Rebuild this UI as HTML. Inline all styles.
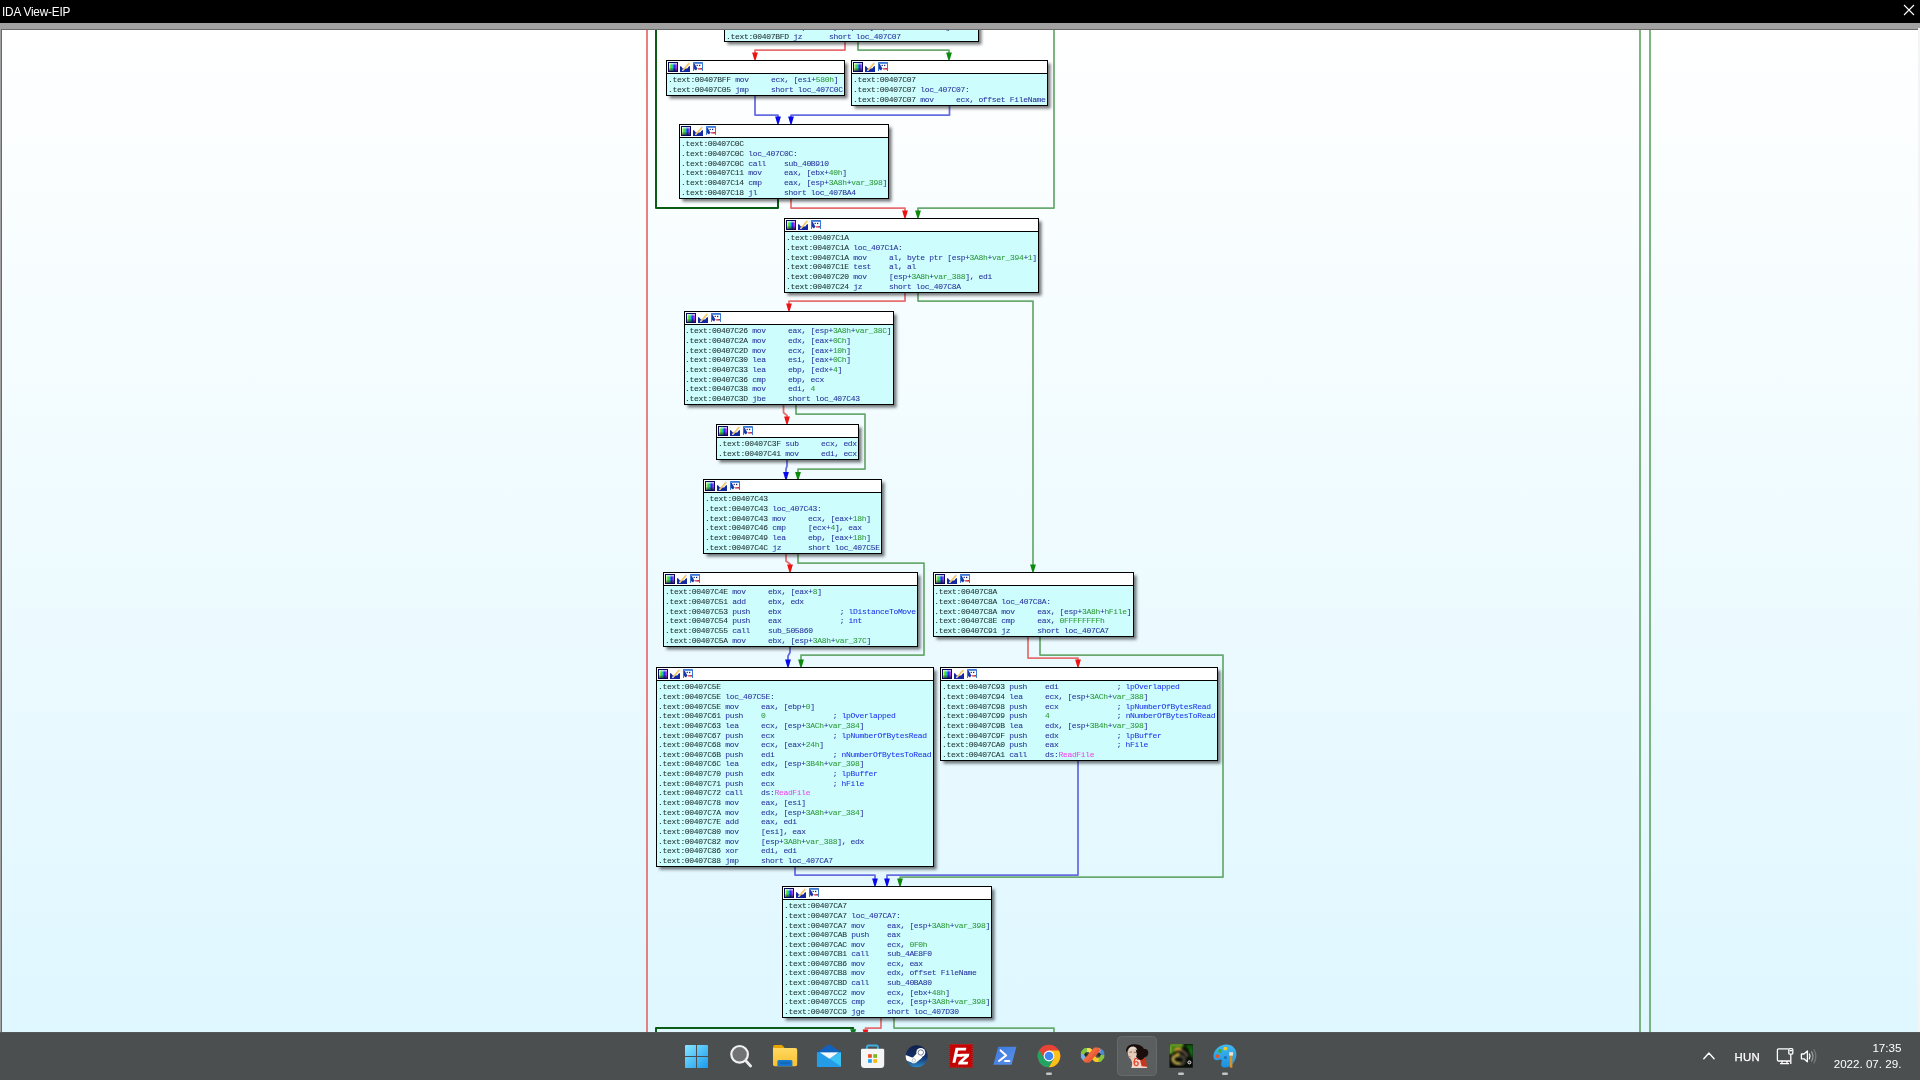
<!DOCTYPE html>
<html><head><meta charset="utf-8"><title>IDA View-EIP</title><style>

html,body{margin:0;padding:0}
body{width:1920px;height:1080px;overflow:hidden;position:relative;background:#fff;font-family:"Liberation Sans",sans-serif}
#tb{position:absolute;left:0;top:0;width:1920px;height:23px;background:#000}
#tt{position:absolute;left:1.8px;top:4.3px;transform:scaleY(1.07);transform-origin:0 11.9px;font-size:11.8px;line-height:16px;color:#fff;letter-spacing:-0.2px;white-space:nowrap;will-change:transform}
#gs{position:absolute;left:0;top:23px;width:1920px;height:6px;background:#a1a1a1}
#gl{position:absolute;left:0;top:29px;width:1918px;height:1px;background:#696969}
#lb{position:absolute;left:0;top:29px;width:1px;height:1051px;background:#a1a1a1}
#lb2{position:absolute;left:1px;top:29px;width:1px;height:1051px;background:#696969}
#rb{position:absolute;left:1918px;top:28px;width:2px;height:1052px;background:#f4f4f4}
#view{position:absolute;left:2px;top:30px;width:1916px;height:1002px;background:linear-gradient(#ffffff,#dff7ff);overflow:hidden}
#g{position:absolute;left:-2px;top:-30px;width:1920px;height:1080px;will-change:transform}
.edges{position:absolute;left:0;top:0}
.n{position:absolute;border:1px solid #000;background:#cdfefd;box-shadow:2.5px 2.5px 3px rgba(10,14,18,.58);overflow:hidden}
.n .h{position:absolute;left:0;top:0;right:0;height:12px;background:#fff;border-bottom:1px solid #000}
.ic{position:absolute;left:1px;top:1px}
.n p{position:absolute;left:1.0px;margin:0;white-space:pre;font-family:"Liberation Mono",monospace;font-size:8px;line-height:10px;height:10px;letter-spacing:-0.3228px;color:#26309c;-webkit-text-stroke:0.06px currentColor}
.n p i{font-style:normal;color:#1e2e30}
.n p b{font-weight:normal}
.g{color:#2e9a3a}.c{color:#1c34ec}.m{color:#f044f0}
#task{position:absolute;left:0;top:1032px;width:1920px;height:48px;background:#4b4f50;will-change:transform}
#task svg{position:absolute;left:0;top:0}
.tx{position:absolute;color:#fff;white-space:nowrap}

</style></head><body>
<svg width="0" height="0" style="position:absolute"><defs><linearGradient id="irb" x1="0" x2="1"><stop offset="0" stop-color="#f4ffd0"/><stop offset=".22" stop-color="#58e020"/><stop offset=".45" stop-color="#20c8b8"/><stop offset=".68" stop-color="#2828f0"/><stop offset="1" stop-color="#d048e8"/></linearGradient><linearGradient id="idk" x1="0" y1="0" x2="0" y2="1"><stop offset="0" stop-color="#fff" stop-opacity=".8"/><stop offset=".3" stop-color="#fff" stop-opacity="0"/><stop offset=".55" stop-color="#000" stop-opacity="0"/><stop offset="1" stop-color="#000" stop-opacity=".6"/></linearGradient></defs></svg>
<div id="tb"></div><div id="tt">IDA View-EIP</div>
<svg style="position:absolute;left:1903px;top:4px" width="12" height="12" viewBox="0 0 12 12"><path d="M1 1 L11 11 M11 1 L1 11" stroke="#fff" stroke-width="1.1" fill="none"/></svg>
<div id="gs"></div><div id="gl"></div><div id="lb"></div><div id="lb2"></div><div id="rb"></div>
<div id="view"><div id="g">
<svg class="edges" width="1920" height="1080" viewBox="0 0 1920 1080"><path d="M647 30 L647 1032" fill="none" stroke="#e56e70" stroke-width="1.75" stroke-linejoin="round"/><path d="M656 30 L656 208 L778 208 L778 198" fill="none" stroke="#0b5c16" stroke-width="2" stroke-linejoin="round"/><path d="M1054 30 L1054 208 L918 208 L918 211" fill="none" stroke="#6aaa70" stroke-width="1.75" stroke-linejoin="round"/><path d="M915.1 210.4 L920.9 210.4 L918.5 218.5 L917.5 218.5 Z" fill="#0b8a0b"/><path d="M1640 30 L1640 1032" fill="none" stroke="#6aaa70" stroke-width="1.75" stroke-linejoin="round"/><path d="M1650 30 L1650 1032" fill="none" stroke="#6aaa70" stroke-width="1.75" stroke-linejoin="round"/><path d="M845 42 L845 50 L755 50 L755 53" fill="none" stroke="#e56e70" stroke-width="1.75" stroke-linejoin="round"/><path d="M752.1 52.4 L757.9 52.4 L755.5 60.5 L754.5 60.5 Z" fill="#ee1212"/><path d="M858 42 L858 50 L949 50 L949 53" fill="none" stroke="#6aaa70" stroke-width="1.75" stroke-linejoin="round"/><path d="M946.1 52.4 L951.9 52.4 L949.5 60.5 L948.5 60.5 Z" fill="#0b8a0b"/><path d="M755 96 L755 115 L778 115 L778 117" fill="none" stroke="#646ce0" stroke-width="1.75" stroke-linejoin="round"/><path d="M775.1 116.4 L780.9 116.4 L778.5 124.5 L777.5 124.5 Z" fill="#0808ee"/><path d="M949.5 106 L949.5 115 L791 115 L791 117" fill="none" stroke="#646ce0" stroke-width="1.75" stroke-linejoin="round"/><path d="M788.1 116.4 L793.9 116.4 L791.5 124.5 L790.5 124.5 Z" fill="#0808ee"/><path d="M791 199 L791 208 L905 208 L905 211" fill="none" stroke="#e56e70" stroke-width="1.75" stroke-linejoin="round"/><path d="M902.1 210.4 L907.9 210.4 L905.5 218.5 L904.5 218.5 Z" fill="#ee1212"/><path d="M905 293 L905 301 L789 301 L789 304" fill="none" stroke="#e56e70" stroke-width="1.75" stroke-linejoin="round"/><path d="M786.1 303.4 L791.9 303.4 L789.5 311.5 L788.5 311.5 Z" fill="#ee1212"/><path d="M918 293 L918 301 L1033 301 L1033 565" fill="none" stroke="#6aaa70" stroke-width="1.75" stroke-linejoin="round"/><path d="M1030.1 564.4 L1035.9 564.4 L1033.5 572.5 L1032.5 572.5 Z" fill="#0b8a0b"/><path d="M783.5 405 L783.5 412.5 L787 415.5 L787 417" fill="none" stroke="#e56e70" stroke-width="1.75" stroke-linejoin="round"/><path d="M784.1 416.4 L789.9 416.4 L787.5 424.5 L786.5 424.5 Z" fill="#ee1212"/><path d="M796 405 L796 414 L865 414 L865 469 L798 469 L798 472.5" fill="none" stroke="#6aaa70" stroke-width="1.75" stroke-linejoin="round"/><path d="M795.1 471.9 L800.9 471.9 L798.5 480 L797.5 480 Z" fill="#0b8a0b"/><path d="M787 460 L787 466 L786 469 L786 472.5" fill="none" stroke="#646ce0" stroke-width="1.75" stroke-linejoin="round"/><path d="M783.1 471.9 L788.9 471.9 L786.5 480 L785.5 480 Z" fill="#0808ee"/><path d="M786 554 L786 561 L790 564 L790 565" fill="none" stroke="#e56e70" stroke-width="1.75" stroke-linejoin="round"/><path d="M787.1 564.4 L792.9 564.4 L790.5 572.5 L789.5 572.5 Z" fill="#ee1212"/><path d="M798 554 L798 563 L924 563 L924 655 L801 655 L801 660" fill="none" stroke="#6aaa70" stroke-width="1.75" stroke-linejoin="round"/><path d="M798.1 659.4 L803.9 659.4 L801.5 667.5 L800.5 667.5 Z" fill="#0b8a0b"/><path d="M790 647 L790 652.5 L788 656 L788 660" fill="none" stroke="#646ce0" stroke-width="1.75" stroke-linejoin="round"/><path d="M785.1 659.4 L790.9 659.4 L788.5 667.5 L787.5 667.5 Z" fill="#0808ee"/><path d="M1028 637 L1028 658 L1078 658 L1078 660" fill="none" stroke="#e56e70" stroke-width="1.75" stroke-linejoin="round"/><path d="M1075.1 659.4 L1080.9 659.4 L1078.5 667.5 L1077.5 667.5 Z" fill="#ee1212"/><path d="M1040 637 L1040 655 L1223 655 L1223 877 L900 877 L900 879" fill="none" stroke="#6aaa70" stroke-width="1.75" stroke-linejoin="round"/><path d="M897.1 878.4 L902.9 878.4 L900.5 886.5 L899.5 886.5 Z" fill="#0b8a0b"/><path d="M795 867 L795 875 L875 875 L875 879" fill="none" stroke="#646ce0" stroke-width="1.75" stroke-linejoin="round"/><path d="M872.1 878.4 L877.9 878.4 L875.5 886.5 L874.5 886.5 Z" fill="#0808ee"/><path d="M1078 761 L1078 875 L887 875 L887 879" fill="none" stroke="#646ce0" stroke-width="1.75" stroke-linejoin="round"/><path d="M884.1 878.4 L889.9 878.4 L887.5 886.5 L886.5 886.5 Z" fill="#0808ee"/><path d="M881 1018 L881 1028 L865.5 1028 L865.5 1029.5" fill="none" stroke="#e56e70" stroke-width="1.75" stroke-linejoin="round"/><path d="M862.6 1029.4 L868.4 1029.4 L866 1037.5 L865 1037.5 Z" fill="#ee1212"/><path d="M894 1018 L894 1028 L1054 1028 L1054 1032" fill="none" stroke="#6aaa70" stroke-width="1.75" stroke-linejoin="round"/><path d="M656 1032 L656 1028 L853.2 1028 L853.2 1029.5" fill="none" stroke="#0b5c16" stroke-width="2" stroke-linejoin="round"/><path d="M850.1 1029.3 L856.3 1029.3 L853.2 1037 Z" fill="#0b7a1c"/></svg>
<div class="n" style="left:724px;top:6px;width:253px;height:34px"><div class="h"><svg class="ic" width="36" height="10" viewBox="0 0 36 10"><rect x="0" y="0" width="10" height="10" fill="#08085c"/><rect x="1" y="1" width="8" height="8" fill="url(#irb)"/><rect x="1" y="1" width="8" height="8" fill="url(#idk)"/><path d="M12 4.3 L13 4.3 L14.8 6.6 L19.2 6.6 L21 4.3 L22 4.3 L22 10 L12 10 Z" fill="#1428a0"/><path d="M14.6 7.6 L20.4 0.8 L21.6 1.9 L15.8 8.6 L14.2 9 Z" fill="#f4c860"/><path d="M14.2 9 L14.6 7.6 L15.8 8.6 Z" fill="#fff"/><path d="M20.4 0.8 L21 0.2 L22 1.2 L21.6 1.9 Z" fill="#c8d0e0"/><rect x="25" y="0" width="10" height="9" rx="0.6" fill="#3a78d8"/><rect x="26" y="1.8" width="8" height="7.6" fill="#fff"/><path d="M26 2 L26 7 L28 8.4 L29.4 6.4 L26.8 2 Z" fill="#1838a8"/><rect x="28.6" y="2.8" width="1.2" height="1.2" fill="#102080"/><rect x="31" y="2.8" width="1.3" height="1.3" fill="#102080"/><path d="M29.4 6.4 L34 6 L34 7.4 L30.4 7.6 Z" fill="#c02030"/></svg></div><p style="top:15px"><i>.text:00407BF8</i> cmp     byte ptr [esp+<b class="g">3A8h</b>+<b class="g">var_394</b>], <b class="g">0</b></p><p style="top:25px"><i>.text:00407BFD</i> jz      short loc_407C07</p></div>
<div class="n" style="left:666px;top:60px;width:177px;height:34px"><div class="h"><svg class="ic" width="36" height="10" viewBox="0 0 36 10"><rect x="0" y="0" width="10" height="10" fill="#08085c"/><rect x="1" y="1" width="8" height="8" fill="url(#irb)"/><rect x="1" y="1" width="8" height="8" fill="url(#idk)"/><path d="M12 4.3 L13 4.3 L14.8 6.6 L19.2 6.6 L21 4.3 L22 4.3 L22 10 L12 10 Z" fill="#1428a0"/><path d="M14.6 7.6 L20.4 0.8 L21.6 1.9 L15.8 8.6 L14.2 9 Z" fill="#f4c860"/><path d="M14.2 9 L14.6 7.6 L15.8 8.6 Z" fill="#fff"/><path d="M20.4 0.8 L21 0.2 L22 1.2 L21.6 1.9 Z" fill="#c8d0e0"/><rect x="25" y="0" width="10" height="9" rx="0.6" fill="#3a78d8"/><rect x="26" y="1.8" width="8" height="7.6" fill="#fff"/><path d="M26 2 L26 7 L28 8.4 L29.4 6.4 L26.8 2 Z" fill="#1838a8"/><rect x="28.6" y="2.8" width="1.2" height="1.2" fill="#102080"/><rect x="31" y="2.8" width="1.3" height="1.3" fill="#102080"/><path d="M29.4 6.4 L34 6 L34 7.4 L30.4 7.6 Z" fill="#c02030"/></svg></div><p style="top:14px"><i>.text:00407BFF</i> mov     ecx, [esi+<b class="g">580h</b>]</p><p style="top:24px"><i>.text:00407C05</i> jmp     short loc_407C0C</p></div>
<div class="n" style="left:851px;top:60px;width:195px;height:44px"><div class="h"><svg class="ic" width="36" height="10" viewBox="0 0 36 10"><rect x="0" y="0" width="10" height="10" fill="#08085c"/><rect x="1" y="1" width="8" height="8" fill="url(#irb)"/><rect x="1" y="1" width="8" height="8" fill="url(#idk)"/><path d="M12 4.3 L13 4.3 L14.8 6.6 L19.2 6.6 L21 4.3 L22 4.3 L22 10 L12 10 Z" fill="#1428a0"/><path d="M14.6 7.6 L20.4 0.8 L21.6 1.9 L15.8 8.6 L14.2 9 Z" fill="#f4c860"/><path d="M14.2 9 L14.6 7.6 L15.8 8.6 Z" fill="#fff"/><path d="M20.4 0.8 L21 0.2 L22 1.2 L21.6 1.9 Z" fill="#c8d0e0"/><rect x="25" y="0" width="10" height="9" rx="0.6" fill="#3a78d8"/><rect x="26" y="1.8" width="8" height="7.6" fill="#fff"/><path d="M26 2 L26 7 L28 8.4 L29.4 6.4 L26.8 2 Z" fill="#1838a8"/><rect x="28.6" y="2.8" width="1.2" height="1.2" fill="#102080"/><rect x="31" y="2.8" width="1.3" height="1.3" fill="#102080"/><path d="M29.4 6.4 L34 6 L34 7.4 L30.4 7.6 Z" fill="#c02030"/></svg></div><p style="top:14px"><i>.text:00407C07</i></p><p style="top:24px"><i>.text:00407C07</i> loc_407C07:</p><p style="top:34px"><i>.text:00407C07</i> mov     ecx, offset FileName</p></div>
<div class="n" style="left:679px;top:124px;width:208px;height:73px"><div class="h"><svg class="ic" width="36" height="10" viewBox="0 0 36 10"><rect x="0" y="0" width="10" height="10" fill="#08085c"/><rect x="1" y="1" width="8" height="8" fill="url(#irb)"/><rect x="1" y="1" width="8" height="8" fill="url(#idk)"/><path d="M12 4.3 L13 4.3 L14.8 6.6 L19.2 6.6 L21 4.3 L22 4.3 L22 10 L12 10 Z" fill="#1428a0"/><path d="M14.6 7.6 L20.4 0.8 L21.6 1.9 L15.8 8.6 L14.2 9 Z" fill="#f4c860"/><path d="M14.2 9 L14.6 7.6 L15.8 8.6 Z" fill="#fff"/><path d="M20.4 0.8 L21 0.2 L22 1.2 L21.6 1.9 Z" fill="#c8d0e0"/><rect x="25" y="0" width="10" height="9" rx="0.6" fill="#3a78d8"/><rect x="26" y="1.8" width="8" height="7.6" fill="#fff"/><path d="M26 2 L26 7 L28 8.4 L29.4 6.4 L26.8 2 Z" fill="#1838a8"/><rect x="28.6" y="2.8" width="1.2" height="1.2" fill="#102080"/><rect x="31" y="2.8" width="1.3" height="1.3" fill="#102080"/><path d="M29.4 6.4 L34 6 L34 7.4 L30.4 7.6 Z" fill="#c02030"/></svg></div><p style="top:14px"><i>.text:00407C0C</i></p><p style="top:24px"><i>.text:00407C0C</i> loc_407C0C:</p><p style="top:34px"><i>.text:00407C0C</i> call    sub_40B910</p><p style="top:43px"><i>.text:00407C11</i> mov     eax, [ebx+<b class="g">40h</b>]</p><p style="top:53px"><i>.text:00407C14</i> cmp     eax, [esp+<b class="g">3A8h</b>+<b class="g">var_398</b>]</p><p style="top:63px"><i>.text:00407C18</i> jl      short loc_407BA4</p></div>
<div class="n" style="left:784px;top:218px;width:253px;height:73px"><div class="h"><svg class="ic" width="36" height="10" viewBox="0 0 36 10"><rect x="0" y="0" width="10" height="10" fill="#08085c"/><rect x="1" y="1" width="8" height="8" fill="url(#irb)"/><rect x="1" y="1" width="8" height="8" fill="url(#idk)"/><path d="M12 4.3 L13 4.3 L14.8 6.6 L19.2 6.6 L21 4.3 L22 4.3 L22 10 L12 10 Z" fill="#1428a0"/><path d="M14.6 7.6 L20.4 0.8 L21.6 1.9 L15.8 8.6 L14.2 9 Z" fill="#f4c860"/><path d="M14.2 9 L14.6 7.6 L15.8 8.6 Z" fill="#fff"/><path d="M20.4 0.8 L21 0.2 L22 1.2 L21.6 1.9 Z" fill="#c8d0e0"/><rect x="25" y="0" width="10" height="9" rx="0.6" fill="#3a78d8"/><rect x="26" y="1.8" width="8" height="7.6" fill="#fff"/><path d="M26 2 L26 7 L28 8.4 L29.4 6.4 L26.8 2 Z" fill="#1838a8"/><rect x="28.6" y="2.8" width="1.2" height="1.2" fill="#102080"/><rect x="31" y="2.8" width="1.3" height="1.3" fill="#102080"/><path d="M29.4 6.4 L34 6 L34 7.4 L30.4 7.6 Z" fill="#c02030"/></svg></div><p style="top:14px"><i>.text:00407C1A</i></p><p style="top:24px"><i>.text:00407C1A</i> loc_407C1A:</p><p style="top:34px"><i>.text:00407C1A</i> mov     al, byte ptr [esp+<b class="g">3A8h</b>+<b class="g">var_394</b>+<b class="g">1</b>]</p><p style="top:43px"><i>.text:00407C1E</i> test    al, al</p><p style="top:53px"><i>.text:00407C20</i> mov     [esp+<b class="g">3A8h</b>+<b class="g">var_388</b>], edi</p><p style="top:63px"><i>.text:00407C24</i> jz      short loc_407C8A</p></div>
<div class="n" style="left:684px;top:311px;width:208px;height:92px"><div class="h"><svg class="ic" width="36" height="10" viewBox="0 0 36 10"><rect x="0" y="0" width="10" height="10" fill="#08085c"/><rect x="1" y="1" width="8" height="8" fill="url(#irb)"/><rect x="1" y="1" width="8" height="8" fill="url(#idk)"/><path d="M12 4.3 L13 4.3 L14.8 6.6 L19.2 6.6 L21 4.3 L22 4.3 L22 10 L12 10 Z" fill="#1428a0"/><path d="M14.6 7.6 L20.4 0.8 L21.6 1.9 L15.8 8.6 L14.2 9 Z" fill="#f4c860"/><path d="M14.2 9 L14.6 7.6 L15.8 8.6 Z" fill="#fff"/><path d="M20.4 0.8 L21 0.2 L22 1.2 L21.6 1.9 Z" fill="#c8d0e0"/><rect x="25" y="0" width="10" height="9" rx="0.6" fill="#3a78d8"/><rect x="26" y="1.8" width="8" height="7.6" fill="#fff"/><path d="M26 2 L26 7 L28 8.4 L29.4 6.4 L26.8 2 Z" fill="#1838a8"/><rect x="28.6" y="2.8" width="1.2" height="1.2" fill="#102080"/><rect x="31" y="2.8" width="1.3" height="1.3" fill="#102080"/><path d="M29.4 6.4 L34 6 L34 7.4 L30.4 7.6 Z" fill="#c02030"/></svg></div><p style="top:14px;left:0.1px"><i>.text:00407C26</i> mov     eax, [esp+<b class="g">3A8h</b>+<b class="g">var_38C</b>]</p><p style="top:24px;left:0.1px"><i>.text:00407C2A</i> mov     edx, [eax+<b class="g">0Ch</b>]</p><p style="top:34px;left:0.1px"><i>.text:00407C2D</i> mov     ecx, [eax+<b class="g">10h</b>]</p><p style="top:43px;left:0.1px"><i>.text:00407C30</i> lea     esi, [eax+<b class="g">0Ch</b>]</p><p style="top:53px;left:0.1px"><i>.text:00407C33</i> lea     ebp, [edx+<b class="g">4</b>]</p><p style="top:63px;left:0.1px"><i>.text:00407C36</i> cmp     ebp, ecx</p><p style="top:72px;left:0.1px"><i>.text:00407C38</i> mov     edi, <b class="g">4</b></p><p style="top:82px;left:0.1px"><i>.text:00407C3D</i> jbe     short loc_407C43</p></div>
<div class="n" style="left:716px;top:424px;width:141px;height:34px"><div class="h"><svg class="ic" width="36" height="10" viewBox="0 0 36 10"><rect x="0" y="0" width="10" height="10" fill="#08085c"/><rect x="1" y="1" width="8" height="8" fill="url(#irb)"/><rect x="1" y="1" width="8" height="8" fill="url(#idk)"/><path d="M12 4.3 L13 4.3 L14.8 6.6 L19.2 6.6 L21 4.3 L22 4.3 L22 10 L12 10 Z" fill="#1428a0"/><path d="M14.6 7.6 L20.4 0.8 L21.6 1.9 L15.8 8.6 L14.2 9 Z" fill="#f4c860"/><path d="M14.2 9 L14.6 7.6 L15.8 8.6 Z" fill="#fff"/><path d="M20.4 0.8 L21 0.2 L22 1.2 L21.6 1.9 Z" fill="#c8d0e0"/><rect x="25" y="0" width="10" height="9" rx="0.6" fill="#3a78d8"/><rect x="26" y="1.8" width="8" height="7.6" fill="#fff"/><path d="M26 2 L26 7 L28 8.4 L29.4 6.4 L26.8 2 Z" fill="#1838a8"/><rect x="28.6" y="2.8" width="1.2" height="1.2" fill="#102080"/><rect x="31" y="2.8" width="1.3" height="1.3" fill="#102080"/><path d="M29.4 6.4 L34 6 L34 7.4 L30.4 7.6 Z" fill="#c02030"/></svg></div><p style="top:14px"><i>.text:00407C3F</i> sub     ecx, edx</p><p style="top:24px"><i>.text:00407C41</i> mov     edi, ecx</p></div>
<div class="n" style="left:703px;top:479px;width:177px;height:73px"><div class="h"><svg class="ic" width="36" height="10" viewBox="0 0 36 10"><rect x="0" y="0" width="10" height="10" fill="#08085c"/><rect x="1" y="1" width="8" height="8" fill="url(#irb)"/><rect x="1" y="1" width="8" height="8" fill="url(#idk)"/><path d="M12 4.3 L13 4.3 L14.8 6.6 L19.2 6.6 L21 4.3 L22 4.3 L22 10 L12 10 Z" fill="#1428a0"/><path d="M14.6 7.6 L20.4 0.8 L21.6 1.9 L15.8 8.6 L14.2 9 Z" fill="#f4c860"/><path d="M14.2 9 L14.6 7.6 L15.8 8.6 Z" fill="#fff"/><path d="M20.4 0.8 L21 0.2 L22 1.2 L21.6 1.9 Z" fill="#c8d0e0"/><rect x="25" y="0" width="10" height="9" rx="0.6" fill="#3a78d8"/><rect x="26" y="1.8" width="8" height="7.6" fill="#fff"/><path d="M26 2 L26 7 L28 8.4 L29.4 6.4 L26.8 2 Z" fill="#1838a8"/><rect x="28.6" y="2.8" width="1.2" height="1.2" fill="#102080"/><rect x="31" y="2.8" width="1.3" height="1.3" fill="#102080"/><path d="M29.4 6.4 L34 6 L34 7.4 L30.4 7.6 Z" fill="#c02030"/></svg></div><p style="top:14px"><i>.text:00407C43</i></p><p style="top:24px"><i>.text:00407C43</i> loc_407C43:</p><p style="top:34px"><i>.text:00407C43</i> mov     ecx, [eax+<b class="g">18h</b>]</p><p style="top:43px"><i>.text:00407C46</i> cmp     [ecx+<b class="g">4</b>], eax</p><p style="top:53px"><i>.text:00407C49</i> lea     ebp, [eax+<b class="g">18h</b>]</p><p style="top:63px"><i>.text:00407C4C</i> jz      short loc_407C5E</p></div>
<div class="n" style="left:663px;top:572px;width:253px;height:73px"><div class="h"><svg class="ic" width="36" height="10" viewBox="0 0 36 10"><rect x="0" y="0" width="10" height="10" fill="#08085c"/><rect x="1" y="1" width="8" height="8" fill="url(#irb)"/><rect x="1" y="1" width="8" height="8" fill="url(#idk)"/><path d="M12 4.3 L13 4.3 L14.8 6.6 L19.2 6.6 L21 4.3 L22 4.3 L22 10 L12 10 Z" fill="#1428a0"/><path d="M14.6 7.6 L20.4 0.8 L21.6 1.9 L15.8 8.6 L14.2 9 Z" fill="#f4c860"/><path d="M14.2 9 L14.6 7.6 L15.8 8.6 Z" fill="#fff"/><path d="M20.4 0.8 L21 0.2 L22 1.2 L21.6 1.9 Z" fill="#c8d0e0"/><rect x="25" y="0" width="10" height="9" rx="0.6" fill="#3a78d8"/><rect x="26" y="1.8" width="8" height="7.6" fill="#fff"/><path d="M26 2 L26 7 L28 8.4 L29.4 6.4 L26.8 2 Z" fill="#1838a8"/><rect x="28.6" y="2.8" width="1.2" height="1.2" fill="#102080"/><rect x="31" y="2.8" width="1.3" height="1.3" fill="#102080"/><path d="M29.4 6.4 L34 6 L34 7.4 L30.4 7.6 Z" fill="#c02030"/></svg></div><p style="top:14px"><i>.text:00407C4E</i> mov     ebx, [eax+<b class="g">8</b>]</p><p style="top:24px"><i>.text:00407C51</i> add     ebx, edx</p><p style="top:34px"><i>.text:00407C53</i> push    ebx             ;<b class="c"> lDistanceToMove</b></p><p style="top:43px"><i>.text:00407C54</i> push    eax             ;<b class="c"> int</b></p><p style="top:53px"><i>.text:00407C55</i> call    sub_505860</p><p style="top:63px"><i>.text:00407C5A</i> mov     ebx, [esp+<b class="g">3A8h</b>+<b class="g">var_37C</b>]</p></div>
<div class="n" style="left:933px;top:572px;width:199px;height:63px"><div class="h"><svg class="ic" width="36" height="10" viewBox="0 0 36 10"><rect x="0" y="0" width="10" height="10" fill="#08085c"/><rect x="1" y="1" width="8" height="8" fill="url(#irb)"/><rect x="1" y="1" width="8" height="8" fill="url(#idk)"/><path d="M12 4.3 L13 4.3 L14.8 6.6 L19.2 6.6 L21 4.3 L22 4.3 L22 10 L12 10 Z" fill="#1428a0"/><path d="M14.6 7.6 L20.4 0.8 L21.6 1.9 L15.8 8.6 L14.2 9 Z" fill="#f4c860"/><path d="M14.2 9 L14.6 7.6 L15.8 8.6 Z" fill="#fff"/><path d="M20.4 0.8 L21 0.2 L22 1.2 L21.6 1.9 Z" fill="#c8d0e0"/><rect x="25" y="0" width="10" height="9" rx="0.6" fill="#3a78d8"/><rect x="26" y="1.8" width="8" height="7.6" fill="#fff"/><path d="M26 2 L26 7 L28 8.4 L29.4 6.4 L26.8 2 Z" fill="#1838a8"/><rect x="28.6" y="2.8" width="1.2" height="1.2" fill="#102080"/><rect x="31" y="2.8" width="1.3" height="1.3" fill="#102080"/><path d="M29.4 6.4 L34 6 L34 7.4 L30.4 7.6 Z" fill="#c02030"/></svg></div><p style="top:14px;left:0.2px"><i>.text:00407C8A</i></p><p style="top:24px;left:0.2px"><i>.text:00407C8A</i> loc_407C8A:</p><p style="top:34px;left:0.2px"><i>.text:00407C8A</i> mov     eax, [esp+<b class="g">3A8h</b>+<b class="g">hFile</b>]</p><p style="top:43px;left:0.2px"><i>.text:00407C8E</i> cmp     eax, <b class="g">0FFFFFFFFh</b></p><p style="top:53px;left:0.2px"><i>.text:00407C91</i> jz      short loc_407CA7</p></div>
<div class="n" style="left:656px;top:667px;width:276px;height:198px"><div class="h"><svg class="ic" width="36" height="10" viewBox="0 0 36 10"><rect x="0" y="0" width="10" height="10" fill="#08085c"/><rect x="1" y="1" width="8" height="8" fill="url(#irb)"/><rect x="1" y="1" width="8" height="8" fill="url(#idk)"/><path d="M12 4.3 L13 4.3 L14.8 6.6 L19.2 6.6 L21 4.3 L22 4.3 L22 10 L12 10 Z" fill="#1428a0"/><path d="M14.6 7.6 L20.4 0.8 L21.6 1.9 L15.8 8.6 L14.2 9 Z" fill="#f4c860"/><path d="M14.2 9 L14.6 7.6 L15.8 8.6 Z" fill="#fff"/><path d="M20.4 0.8 L21 0.2 L22 1.2 L21.6 1.9 Z" fill="#c8d0e0"/><rect x="25" y="0" width="10" height="9" rx="0.6" fill="#3a78d8"/><rect x="26" y="1.8" width="8" height="7.6" fill="#fff"/><path d="M26 2 L26 7 L28 8.4 L29.4 6.4 L26.8 2 Z" fill="#1838a8"/><rect x="28.6" y="2.8" width="1.2" height="1.2" fill="#102080"/><rect x="31" y="2.8" width="1.3" height="1.3" fill="#102080"/><path d="M29.4 6.4 L34 6 L34 7.4 L30.4 7.6 Z" fill="#c02030"/></svg></div><p style="top:14px"><i>.text:00407C5E</i></p><p style="top:24px"><i>.text:00407C5E</i> loc_407C5E:</p><p style="top:34px"><i>.text:00407C5E</i> mov     eax, [ebp+<b class="g">0</b>]</p><p style="top:43px"><i>.text:00407C61</i> push    <b class="g">0</b>               ;<b class="c"> lpOverlapped</b></p><p style="top:53px"><i>.text:00407C63</i> lea     ecx, [esp+<b class="g">3ACh</b>+<b class="g">var_384</b>]</p><p style="top:63px"><i>.text:00407C67</i> push    ecx             ;<b class="c"> lpNumberOfBytesRead</b></p><p style="top:72px"><i>.text:00407C68</i> mov     ecx, [eax+<b class="g">24h</b>]</p><p style="top:82px"><i>.text:00407C6B</i> push    edi             ;<b class="c"> nNumberOfBytesToRead</b></p><p style="top:91px"><i>.text:00407C6C</i> lea     edx, [esp+<b class="g">3B4h</b>+<b class="g">var_398</b>]</p><p style="top:101px"><i>.text:00407C70</i> push    edx             ;<b class="c"> lpBuffer</b></p><p style="top:111px"><i>.text:00407C71</i> push    ecx             ;<b class="c"> hFile</b></p><p style="top:120px"><i>.text:00407C72</i> call    ds:<b class="m">ReadFile</b></p><p style="top:130px"><i>.text:00407C78</i> mov     eax, [esi]</p><p style="top:140px"><i>.text:00407C7A</i> mov     edx, [esp+<b class="g">3A8h</b>+<b class="g">var_384</b>]</p><p style="top:149px"><i>.text:00407C7E</i> add     eax, edi</p><p style="top:159px"><i>.text:00407C80</i> mov     [esi], eax</p><p style="top:169px"><i>.text:00407C82</i> mov     [esp+<b class="g">3A8h</b>+<b class="g">var_388</b>], edx</p><p style="top:178px"><i>.text:00407C86</i> xor     edi, edi</p><p style="top:188px"><i>.text:00407C88</i> jmp     short loc_407CA7</p></div>
<div class="n" style="left:940px;top:667px;width:276px;height:92px"><div class="h"><svg class="ic" width="36" height="10" viewBox="0 0 36 10"><rect x="0" y="0" width="10" height="10" fill="#08085c"/><rect x="1" y="1" width="8" height="8" fill="url(#irb)"/><rect x="1" y="1" width="8" height="8" fill="url(#idk)"/><path d="M12 4.3 L13 4.3 L14.8 6.6 L19.2 6.6 L21 4.3 L22 4.3 L22 10 L12 10 Z" fill="#1428a0"/><path d="M14.6 7.6 L20.4 0.8 L21.6 1.9 L15.8 8.6 L14.2 9 Z" fill="#f4c860"/><path d="M14.2 9 L14.6 7.6 L15.8 8.6 Z" fill="#fff"/><path d="M20.4 0.8 L21 0.2 L22 1.2 L21.6 1.9 Z" fill="#c8d0e0"/><rect x="25" y="0" width="10" height="9" rx="0.6" fill="#3a78d8"/><rect x="26" y="1.8" width="8" height="7.6" fill="#fff"/><path d="M26 2 L26 7 L28 8.4 L29.4 6.4 L26.8 2 Z" fill="#1838a8"/><rect x="28.6" y="2.8" width="1.2" height="1.2" fill="#102080"/><rect x="31" y="2.8" width="1.3" height="1.3" fill="#102080"/><path d="M29.4 6.4 L34 6 L34 7.4 L30.4 7.6 Z" fill="#c02030"/></svg></div><p style="top:14px"><i>.text:00407C93</i> push    edi             ;<b class="c"> lpOverlapped</b></p><p style="top:24px"><i>.text:00407C94</i> lea     ecx, [esp+<b class="g">3ACh</b>+<b class="g">var_388</b>]</p><p style="top:34px"><i>.text:00407C98</i> push    ecx             ;<b class="c"> lpNumberOfBytesRead</b></p><p style="top:43px"><i>.text:00407C99</i> push    <b class="g">4</b>               ;<b class="c"> nNumberOfBytesToRead</b></p><p style="top:53px"><i>.text:00407C9B</i> lea     edx, [esp+<b class="g">3B4h</b>+<b class="g">var_398</b>]</p><p style="top:63px"><i>.text:00407C9F</i> push    edx             ;<b class="c"> lpBuffer</b></p><p style="top:72px"><i>.text:00407CA0</i> push    eax             ;<b class="c"> hFile</b></p><p style="top:82px"><i>.text:00407CA1</i> call    ds:<b class="m">ReadFile</b></p></div>
<div class="n" style="left:782px;top:886px;width:208px;height:130px"><div class="h"><svg class="ic" width="36" height="10" viewBox="0 0 36 10"><rect x="0" y="0" width="10" height="10" fill="#08085c"/><rect x="1" y="1" width="8" height="8" fill="url(#irb)"/><rect x="1" y="1" width="8" height="8" fill="url(#idk)"/><path d="M12 4.3 L13 4.3 L14.8 6.6 L19.2 6.6 L21 4.3 L22 4.3 L22 10 L12 10 Z" fill="#1428a0"/><path d="M14.6 7.6 L20.4 0.8 L21.6 1.9 L15.8 8.6 L14.2 9 Z" fill="#f4c860"/><path d="M14.2 9 L14.6 7.6 L15.8 8.6 Z" fill="#fff"/><path d="M20.4 0.8 L21 0.2 L22 1.2 L21.6 1.9 Z" fill="#c8d0e0"/><rect x="25" y="0" width="10" height="9" rx="0.6" fill="#3a78d8"/><rect x="26" y="1.8" width="8" height="7.6" fill="#fff"/><path d="M26 2 L26 7 L28 8.4 L29.4 6.4 L26.8 2 Z" fill="#1838a8"/><rect x="28.6" y="2.8" width="1.2" height="1.2" fill="#102080"/><rect x="31" y="2.8" width="1.3" height="1.3" fill="#102080"/><path d="M29.4 6.4 L34 6 L34 7.4 L30.4 7.6 Z" fill="#c02030"/></svg></div><p style="top:14px"><i>.text:00407CA7</i></p><p style="top:24px"><i>.text:00407CA7</i> loc_407CA7:</p><p style="top:34px"><i>.text:00407CA7</i> mov     eax, [esp+<b class="g">3A8h</b>+<b class="g">var_398</b>]</p><p style="top:43px"><i>.text:00407CAB</i> push    eax</p><p style="top:53px"><i>.text:00407CAC</i> mov     ecx, <b class="g">0F0h</b></p><p style="top:62px"><i>.text:00407CB1</i> call    sub_4AE8F0</p><p style="top:72px"><i>.text:00407CB6</i> mov     ecx, eax</p><p style="top:81px"><i>.text:00407CB8</i> mov     edx, offset FileName</p><p style="top:91px"><i>.text:00407CBD</i> call    sub_40BA80</p><p style="top:101px"><i>.text:00407CC2</i> mov     ecx, [ebx+<b class="g">48h</b>]</p><p style="top:110px"><i>.text:00407CC5</i> cmp     ecx, [esp+<b class="g">3A8h</b>+<b class="g">var_398</b>]</p><p style="top:120px"><i>.text:00407CC9</i> jge     short loc_407D30</p></div>
</div></div>
<div id="task"><svg width="1920" height="48" viewBox="0 1032 1920 48">
<defs>
<linearGradient id="gw" x1="0" y1="0" x2="1" y2="1"><stop offset="0" stop-color="#86e6ff"/><stop offset="1" stop-color="#189af0"/></linearGradient>
<linearGradient id="gf" x1="0" y1="0" x2="0" y2="1"><stop offset="0" stop-color="#ffd860"/><stop offset="1" stop-color="#f8c030"/></linearGradient>
<linearGradient id="gm" x1="0" y1="0" x2="1" y2="1"><stop offset="0" stop-color="#38a8f0"/><stop offset="1" stop-color="#1478d0"/></linearGradient>
<linearGradient id="gst" x1="0" y1="0" x2="0" y2="1"><stop offset="0" stop-color="#10204a"/><stop offset=".55" stop-color="#14306a"/><stop offset="1" stop-color="#2a8cc8"/></linearGradient>
<linearGradient id="gps" x1="0" y1="0" x2="1" y2="1"><stop offset="0" stop-color="#3c7ae0"/><stop offset="1" stop-color="#5a90e8"/></linearGradient>
<linearGradient id="gpa" x1="0" y1="0" x2="0" y2="1"><stop offset="0" stop-color="#42b8f0"/><stop offset="1" stop-color="#1c90e0"/></linearGradient>
<filter id="bl4" x="-10%" y="-10%" width="120%" height="120%"><feGaussianBlur stdDeviation="0.5"/></filter><filter id="bl6" x="-5%" y="-5%" width="110%" height="110%"><feGaussianBlur stdDeviation="0.85"/></filter>
<clipPath id="csn"><rect x="1169.5" y="1044" width="23.3" height="23.7"/></clipPath>
<clipPath id="cst"><circle cx="916.7" cy="1056.2" r="11"/></clipPath>
</defs>
<rect x="0" y="1032" width="1920" height="1" fill="#55595a"/>
<!-- windows logo -->
<g fill="url(#gw)"><rect x="685" y="1045" width="23" height="23" rx="0.8"/></g>
<rect x="696" y="1045" width="1" height="23" fill="#4b4f50"/><rect x="685" y="1056" width="23" height="1" fill="#4b4f50"/>
<!-- search -->
<circle cx="739.6" cy="1054.3" r="8.3" fill="#707274" stroke="#f2f2f2" stroke-width="2.2"/>
<path d="M745.8 1060.8 L750.6 1066" stroke="#ececec" stroke-width="2.8" stroke-linecap="round"/>
<!-- folder -->
<path d="M773 1047.2 Q773 1045 775 1045 L781.2 1045 Q782.2 1045 783 1046 L784.6 1048 L773 1049 Z" fill="#e8a400"/>
<path d="M773 1048 L795.4 1048 Q797.2 1048 797.2 1049.8 L797.2 1064.4 Q797.2 1066.2 795.4 1066.2 L774.8 1066.2 Q773 1066.2 773 1064.4 Z" fill="url(#gf)"/>
<path d="M777.4 1066.2 L777.4 1061.6 Q777.4 1060 779 1060 L790.8 1060 Q792.4 1060 792.4 1061.6 L792.4 1066.2 Z" fill="#1878d0"/>
<rect x="779.6" y="1062" width="10.6" height="2.2" rx="1" fill="#1468b8"/>
<!-- mail -->
<path d="M817 1052.2 L829.2 1044.2 L841 1052.2 Z" fill="#1162c0"/>
<rect x="816.9" y="1051.5" width="24.1" height="15.5" rx="1" fill="#249ce8"/>
<path d="M829.4 1058.6 L841 1052 L841 1066.4 Z" fill="#3cc2f4"/>
<path d="M819.6 1052.2 L838.8 1052.2 L829.4 1058.8 Z" fill="#f6f9fd"/>
<rect x="816.9" y="1051.3" width="24.1" height="0.9" fill="#0c54a8"/>
<!-- store -->
<path d="M866.9 1050 L866.9 1047.2 Q866.9 1045.5 868.6 1045.5 L876.2 1045.5 Q877.9 1045.5 877.9 1047.2 L877.9 1050" fill="none" stroke="#3cb0e6" stroke-width="1.8"/>
<path d="M861 1050 Q861 1048.8 862.2 1048.8 L883 1048.8 Q884.2 1048.8 884.2 1050 L884.2 1064.6 Q884.2 1068.1 880.7 1068.1 L864.5 1068.1 Q861 1068.1 861 1064.6 Z" fill="#f5f5f6"/>
<rect x="868.1" y="1054.2" width="3.7" height="3.6" fill="#f04a1c"/><rect x="873.3" y="1054.2" width="3.7" height="3.6" fill="#78b818"/>
<rect x="868.1" y="1059.2" width="3.7" height="3.6" fill="#18a0f0"/><rect x="873.3" y="1059.2" width="3.7" height="3.6" fill="#f8b810"/>
<!-- steam -->
<circle cx="916.7" cy="1056.2" r="11" fill="url(#gst)"/>
<g clip-path="url(#cst)" fill="#fff">
<path d="M904 1054.4 L913.4 1058 L911.6 1062.4 L904 1059.6 Z"/>
<path d="M916.6 1053.4 L922.4 1057.4 L916.2 1062.6 L911.6 1059 Z"/>
<circle cx="920.8" cy="1052.5" r="4.5"/><circle cx="913.8" cy="1060.4" r="2.8"/>
</g>
<circle cx="920.8" cy="1052.5" r="2.7" fill="none" stroke="#3a4668" stroke-width=".7"/>
<circle cx="913.8" cy="1060.4" r="1.7" fill="none" stroke="#7886a4" stroke-width=".5"/>
<!-- filezilla -->
<rect x="949.2" y="1044" width="23.5" height="23.7" fill="#a80000"/><rect x="950.2" y="1045" width="21.5" height="21.7" fill="#c40404"/>
<rect x="949.7" y="1044.5" width="22.5" height="22.7" fill="none" stroke="#d85050" stroke-width=".7" stroke-dasharray="1 1"/>
<path d="M955.6 1047.8 L966.4 1047.8 L965.8 1050.6 L958.2 1050.6 L957.4 1054 L962.4 1054 L961.8 1056.8 L956.8 1056.8 L955.4 1062.8 L952.4 1062.8 Z" fill="#fff"/>
<path d="M960.6 1053.8 L969.4 1053.8 L968.8 1056.4 L962.8 1061.8 L968.2 1061.8 L967.6 1064.6 L958 1064.6 L958.6 1062 L964.6 1056.6 L960 1056.6 Z" fill="#fff"/>
<!-- powershell -->
<path d="M998.2 1046.8 L1016.4 1046.8 L1011.6 1064.8 L993.4 1064.8 Z" fill="url(#gps)"/>
<path d="M1000.6 1050.4 L1006.2 1055.4 L999 1061" fill="none" stroke="#fff" stroke-width="2" stroke-linecap="round" stroke-linejoin="round"/>
<path d="M1005 1061 L1009.4 1061" stroke="#fff" stroke-width="1.9" stroke-linecap="round"/>
<!-- chrome -->
<circle cx="1049" cy="1056" r="11.3" fill="#e94335"/>
<path d="M1058.93 1050.6 A11.3 11.3 0 0 1 1048.72 1067.3 L1053.68 1058.7 L1049 1056 L1049 1050.6 Z" fill="#fbc116"/>
<path d="M1048.72 1067.3 A11.3 11.3 0 0 1 1039.36 1050.1 L1044.32 1058.7 L1049 1056 L1053.68 1058.7 Z" fill="#1fa463"/>
<circle cx="1049" cy="1056" r="5.4" fill="#fff"/><circle cx="1049" cy="1056" r="4.3" fill="#3f86f4"/>
<rect x="1046" y="1072.4" width="6" height="2.6" rx="1.3" fill="#c4c6c6"/>
<!-- colorful x -->
<g fill="none" stroke-width="4.2" stroke-linejoin="round" stroke-linecap="butt">
<path d="M1083 1054.8 L1083 1052.6 L1085.2 1050 L1088.2 1050" stroke="#84c440"/>
<path d="M1087 1050 L1089.4 1050 L1092 1052.4" stroke="#f6dc50"/>
<path d="M1083 1054 L1083 1057 L1085.4 1059.8" stroke="#78b0e4"/>
<path d="M1100 1050 L1102.2 1052.6 L1102.2 1056" stroke="#4c88d0"/>
<path d="M1096 1050.4 L1100.4 1050.4" stroke="#d8a0b8"/>
<path d="M1102.2 1055 L1102.2 1057 L1099.8 1059.8 L1098 1059.8" stroke="#84c440"/>
<path d="M1093 1057 L1095.6 1059.8 L1098.6 1059.8" stroke="#f8c828"/>
</g>
<path d="M1084.6 1062.4 L1089.6 1062.4 L1100.2 1050.6 L1098.4 1047.6 L1094.2 1047.6 L1083.6 1059.4 Z" fill="#f0683c"/>
<path d="M1086 1062.2 L1088.6 1062.2 L1099.4 1050.2 L1098.6 1048.6 Z" fill="#e85030" opacity=".7"/>
<rect x="1084.4" y="1053.2" width="3" height="3" fill="#2a3028" transform="rotate(45 1085.9 1054.7)"/>
<rect x="1097.6" y="1053.2" width="3" height="3" fill="#2a3028" transform="rotate(45 1099.1 1054.7)"/>
<!-- IDA (active) -->
<rect x="1117.5" y="1036.5" width="39" height="39" rx="4" fill="#5a5e5f" stroke="#676b6c" stroke-width="1"/>
<g filter="url(#bl4)">
<path d="M1131 1059.4 L1138 1056.6 L1141.4 1060 Q1145.4 1063 1147.4 1067.9 L1131.2 1067.9 Q1133.2 1063.6 1131 1059.4 Z" fill="#f0d6cc"/>
<path d="M1140 1059.4 L1145.8 1057.4 L1146.8 1066.8 L1141.6 1066.2 Z" fill="#c8341a"/>
<path d="M1126.2 1052.6 C1125.2 1046.4 1129.6 1044 1135 1044.2 C1140 1044.4 1143 1046.6 1144 1049 C1147 1048.4 1148.8 1050.8 1148.2 1053.6 C1147.8 1056.2 1145.8 1057.4 1144.2 1057.4 C1143.2 1059.6 1140.6 1060.8 1138.2 1059.2 L1136 1052 L1129 1048 Z" fill="#1a100e"/>
<ellipse cx="1132.4" cy="1053.4" rx="4.5" ry="6.7" fill="#e4ccb8" transform="rotate(-8 1132.4 1053.4)"/>
<path d="M1128.6 1050.6 Q1129.4 1046.6 1133.8 1046.6 Q1136.6 1047.2 1137.4 1050.4 Q1134 1047.8 1130.6 1049.6 Z" fill="#e8dcd0"/>
<path d="M1129.4 1052.2 L1132 1052 M1133.6 1052.2 L1136 1052.4" stroke="#7a6658" stroke-width="0.9"/>
<path d="M1129 1056.6 L1130.6 1057" stroke="#c8604c" stroke-width="0.9"/>
<path d="M1137 1050 Q1139.6 1054 1138.4 1059 L1136.2 1057 Q1137.6 1053.6 1136 1050.4 Z" fill="#1a100e"/>
</g>
<text x="1133.3" y="1066" font-family="Liberation Sans, sans-serif" font-size="10.4" fill="#ea4a26" stroke="#e03c1a" stroke-width=".35">6</text>
<!-- snake -->
<rect x="1169.5" y="1044" width="23.3" height="23.7" fill="#0a0c08"/>
<g clip-path="url(#csn)"><g filter="url(#bl6)">
<path d="M1168 1043 L1184 1043 L1183 1047.6 L1176 1049.6 L1174 1053 L1168 1055 Z" fill="#3c7c0c"/>
<rect x="1169.5" y="1046" width="1.6" height="8" fill="#8cbc48"/><rect x="1171" y="1044" width="12" height="1.4" fill="#86b43c"/>
<path d="M1185.6 1045 L1194 1044.4 L1194 1059 Q1189.6 1057 1190 1052 Q1188.6 1048 1185.6 1047 Z" fill="#0c5c10"/>
<path d="M1188.8 1048.6 Q1191.8 1050 1191.6 1054.6 Q1189.6 1053 1188.8 1048.6 Z" fill="#1c9c20"/>
<path d="M1175.6 1050 Q1178 1048.2 1180.6 1049.6" fill="none" stroke="#d0a038" stroke-width="2.6" stroke-linecap="round"/>
<path d="M1181.6 1050.6 Q1186 1052.6 1187 1056" fill="none" stroke="#6c5c4c" stroke-width="2.2" stroke-linecap="round"/>
<path d="M1177.6 1055.4 Q1172.4 1056 1172.8 1059.6 Q1174 1063.6 1179.6 1063.6" fill="none" stroke="#bca848" stroke-width="3" stroke-linecap="round"/>
<path d="M1180.4 1056 Q1184.6 1056.6 1184.4 1060.4 Q1183.8 1063.6 1180.6 1064.6" fill="none" stroke="#4c483c" stroke-width="2.8" stroke-linecap="round"/>
<path d="M1176.4 1054 L1179.6 1053.4" stroke="#d8a828" stroke-width="1.8"/>
</g></g>
<circle cx="1189.4" cy="1062.4" r="1.5" fill="#3a3a3a" stroke="#e4e4e4" stroke-width="1"/>
<rect x="1178" y="1072.4" width="6" height="2.6" rx="1.3" fill="#c4c6c6"/>
<!-- paint -->
<path d="M1226.4 1044.6 C1233 1044.6 1236.8 1049.6 1236.4 1055 C1236 1061 1231.4 1067.6 1225 1067.6 C1221 1067.6 1220.6 1064.4 1221.6 1062 C1222.4 1060 1221.4 1059 1219.6 1059.6 C1216 1061 1213.2 1060 1213.4 1056 C1213.8 1050 1219.4 1044.6 1226.4 1044.6 Z" fill="url(#gpa)"/>
<circle cx="1217.4" cy="1056.2" r="1.9" fill="#e0582c"/><circle cx="1220" cy="1051" r="1.9" fill="#38b034"/><circle cx="1225.4" cy="1048.6" r="1.9" fill="#f4cc1c"/><circle cx="1225.4" cy="1057.4" r="1.5" fill="#1c70b8"/>
<rect x="1229.8" y="1055" width="2.6" height="12.6" fill="#d8902c"/><rect x="1229.2" y="1052.2" width="3.8" height="3.4" fill="#f0e4d0"/>
<rect x="1222" y="1072.4" width="6" height="2.6" rx="1.3" fill="#c4c6c6"/>
<!-- tray -->
<path d="M1703.8 1058.7 L1708.9 1053 L1714.1 1058.7" fill="none" stroke="#fff" stroke-width="1.4" stroke-linecap="round" stroke-linejoin="round"/>
<g fill="none" stroke="#fff" stroke-width="1.3">
<path d="M1788.6 1048.8 L1778.6 1048.8 Q1777.4 1048.8 1777.4 1050 L1777.4 1059.8 Q1777.4 1061 1778.6 1061 L1790.4 1061"/>
<path d="M1782 1061 L1782 1063.6 M1787 1061 L1787 1063.6 M1780 1063.6 L1789 1063.6"/>
<rect x="1788.8" y="1048.6" width="4" height="5.6" rx="1"/><path d="M1789.6 1050.6 L1792 1050.6 M1790.8 1054.2 L1790.8 1064"/>
<path d="M1801.4 1054 L1804 1054 L1807.4 1051 L1807.4 1061.8 L1804 1058.8 L1801.4 1058.8 Z" stroke-linejoin="round"/>
<path d="M1809.4 1054 Q1810.8 1056.4 1809.4 1058.8" stroke-linecap="round"/>
<path d="M1811.6 1051.8 Q1814.4 1056.4 1811.6 1061" stroke="#9a9c9c" stroke-linecap="round"/>
<path d="M1814 1049.8 Q1817.8 1056.4 1814 1063" stroke="#747878" stroke-linecap="round"/>
</g>
<g font-family="Liberation Sans, sans-serif" fill="#fff">
<text x="1734.4" y="1060.8" font-size="11.4" letter-spacing="0.35" stroke="#fff" stroke-width=".25">HUN</text>
<text x="1901.4" y="1051.8" font-size="11.6" text-anchor="end">17:35</text>
<text x="1901.4" y="1067.8" font-size="11.6" text-anchor="end">2022. 07. 29.</text>
</g>
</svg>
</div>
</body></html>
